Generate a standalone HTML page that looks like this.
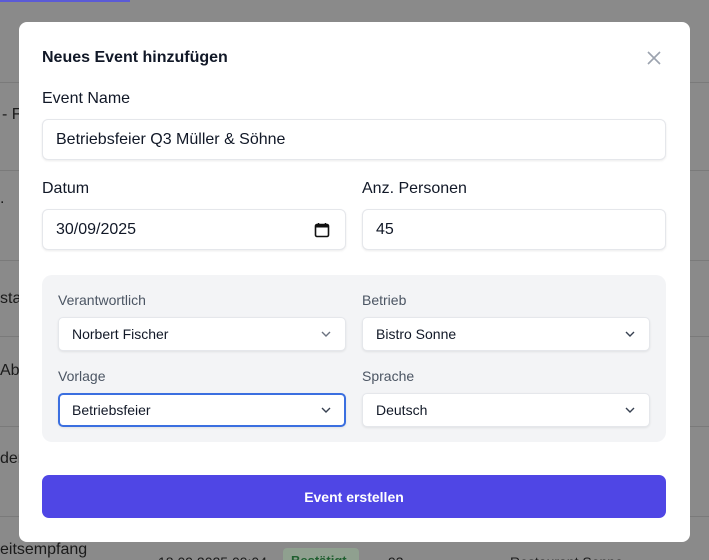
<!DOCTYPE html><html><head><meta charset="utf-8"><style>
*{box-sizing:border-box;margin:0;padding:0}
html{width:709px;height:560px;overflow:hidden}
body{width:709px;height:560px;overflow:hidden;background:#8a8a8a;font-family:"Liberation Sans",sans-serif;position:relative;color:#111827}
.bg{position:absolute;left:0;font-size:16px;color:#1a1a1a}
.line{position:absolute;left:0;width:709px;height:1px;background:#7a7a7a}
.modal{position:absolute;left:19px;top:22px;width:671px;height:520px;background:#fff;border-radius:8px}
.abs{position:absolute}
.lbl{font-size:16px;color:#111827}
.inp{position:absolute;background:#fff;border:1px solid #e5e7eb;border-radius:6px;box-shadow:0 1px 2px rgba(0,0,0,.08);font-size:16px;padding-left:13px;display:flex;align-items:center;color:#111827}
.sel{position:absolute;background:#fff;border:1px solid #e5e7eb;border-radius:5px;box-shadow:0 1px 2px rgba(0,0,0,.08);font-size:14px;padding-left:13px;display:flex;align-items:center;color:#111827}
.sl{position:absolute;font-size:14px;color:#4b5563}
.chev{position:absolute;right:14px;top:12px}
</style></head><body>
<div class="abs" style="left:0;top:0;width:130px;height:2px;background:#5b5bd6"></div>
<div class="line" style="top:82px"></div>
<div class="line" style="top:170px"></div>
<div class="line" style="top:260px"></div>
<div class="line" style="top:336px"></div>
<div class="line" style="top:426px"></div>
<div class="line" style="top:516px"></div>
<div class="bg" style="top:106px;left:2px">- F</div>
<div class="bg" style="top:190px;left:0">.</div>
<div class="bg" style="top:290px;left:0">sta</div>
<div class="bg" style="top:362px;left:0">Abe</div>
<div class="bg" style="top:450px;left:0">der</div>
<div class="bg" style="top:541px;left:0">eitsempfang</div>
<div class="bg" style="top:554px;left:158px;font-size:14px">18.09.2025 09:04</div>
<div class="abs" style="top:548px;left:283px;width:76px;height:20px;background:#8fa08f;border-radius:4px;font-size:13px;color:#1f5f2f;padding:5px 8px;font-weight:bold">Bestätigt</div>
<div class="bg" style="top:554px;left:388px;font-size:14px">93</div>
<div class="bg" style="top:554px;left:510px;font-size:14px">Restaurant Sonne</div>
<div class="modal">
<div class="abs" style="left:23px;top:27px;font-size:16px;font-weight:bold;color:#111827">Neues Event hinzufügen</div>
<svg class="abs" style="left:627px;top:28px" width="16" height="16" viewBox="0 0 16 16"><path d="M2 2L14 14M14 2L2 14" stroke="#9ca3af" stroke-width="1.6"/></svg>
<div class="abs lbl" style="left:23px;top:68px">Event Name</div>
<div class="inp" style="left:23px;top:97px;width:624px;height:41px">Betriebsfeier Q3 Müller &amp; Söhne</div>
<div class="abs lbl" style="left:23px;top:158px">Datum</div>
<div class="abs lbl" style="left:343px;top:158px">Anz. Personen</div>
<div class="inp" style="left:23px;top:187px;width:304px;height:41px">30/09/2025
<svg class="abs" style="right:15px;top:12px" width="16" height="16" viewBox="0 0 16 16"><rect x="1.5" y="2.5" width="13" height="12" rx="1.5" fill="none" stroke="#111" stroke-width="1.6"/><rect x="1.5" y="2.5" width="13" height="3" fill="#111"/><path d="M4.5 1v3M11.5 1v3" stroke="#111" stroke-width="1.5"/></svg></div>
<div class="inp" style="left:343px;top:187px;width:304px;height:41px">45</div>
<div class="abs" style="left:23px;top:253px;width:624px;height:167px;background:#f3f4f6;border-radius:10px"></div>
<div class="sl" style="left:39px;top:270px">Verantwortlich</div>
<div class="sl" style="left:343px;top:270px">Betrieb</div>
<div class="sel" style="left:39px;top:295px;width:288px;height:34px">Norbert Fischer<svg class="chev" width="10" height="8" viewBox="0 0 10 8"><path d="M1 2l4 4 4-4" fill="none" stroke="#6b7280" stroke-width="1.4"/></svg></div>
<div class="sel" style="left:343px;top:295px;width:288px;height:34px">Bistro Sonne<svg class="chev" width="10" height="8" viewBox="0 0 10 8"><path d="M1 2l4 4 4-4" fill="none" stroke="#374151" stroke-width="1.4"/></svg></div>
<div class="sl" style="left:39px;top:346px">Vorlage</div>
<div class="sl" style="left:343px;top:346px">Sprache</div>
<div class="sel" style="left:39px;top:371px;width:288px;height:34px;border:2px solid #3b6fe0;padding-left:12px">Betriebsfeier<svg class="chev" style="right:13px;top:11px" width="10" height="8" viewBox="0 0 10 8"><path d="M1 2l4 4 4-4" fill="none" stroke="#374151" stroke-width="1.4"/></svg></div>
<div class="sel" style="left:343px;top:371px;width:288px;height:34px">Deutsch<svg class="chev" width="10" height="8" viewBox="0 0 10 8"><path d="M1 2l4 4 4-4" fill="none" stroke="#374151" stroke-width="1.4"/></svg></div>
<div class="abs" style="left:23px;top:453px;width:624px;height:43px;background:#4f46e5;border-radius:7px;color:#fff;font-size:14px;font-weight:bold;display:flex;align-items:center;justify-content:center">Event erstellen</div>
</div>
</body></html>
